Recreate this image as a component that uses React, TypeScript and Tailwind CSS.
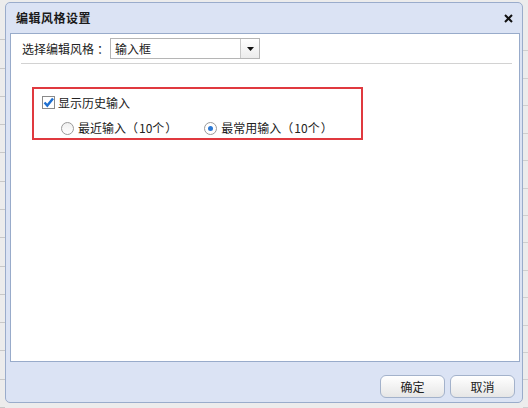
function Cell({ ch, align }: { ch: string; align: 'left' | 'right' }) {
  const cls = align === 'left' ? 'justify-start' : 'justify-end';
  return <span className={`flex w-[12px] overflow-hidden ${cls}`}>{ch}</span>;
}

function Count({ label }: { label: string }) {
  return (
    <span className="ml-[4px] flex items-center whitespace-nowrap">
      <span>{label}</span>
      <Cell ch="（" align="right" />
      <span className="mx-[1px]">10个</span>
      <Cell ch="）" align="left" />
    </span>
  );
}

export default function App() {
  const font = { fontFamily: '"Noto Sans CJK SC", "Liberation Sans", sans-serif' };
  const rows = Array.from({ length: 14 });
  return (
    <div className="relative w-[528px] h-[408px] overflow-hidden bg-[#ececec] text-[12px] text-[#222]" style={font}>
      {/* page behind the dialog */}
      <div className="flex h-full">
        <div className="w-[5px] flex flex-col pt-[12px]">
          {rows.map((_, i) => (
            <div key={i} className="h-[30px] border-b border-[#c8c8c8]" />
          ))}
        </div>
        <div className="flex-1" />
        <div className="w-[5px] flex flex-col pt-[24px]">
          {rows.map((_, i) => (
            <div key={i} className="h-[30px] border-b border-[#cfcfcf]" />
          ))}
        </div>
      </div>

      {/* dialog */}
      <div className="absolute left-[5px] top-[2px] w-[518px] h-[401px] rounded-[5px] border border-[#9aaccb] bg-[#dbe3f4] flex flex-col">
        <div className="h-[30px] flex items-center justify-between pl-[10px] pr-[8px]">
          <span className="text-[12px] font-bold text-[#1a1a1a] tracking-[0.5px]">编辑风格设置</span>
          <svg width="9" height="9" viewBox="0 0 9 9" className="mr-[1px]">
            <path d="M1 1 L8 8 M8 1 L1 8" stroke="#111" strokeWidth="2" />
          </svg>
        </div>

        <div className="ml-[4px] mr-[2px] h-[329px] border border-[#98abca] bg-white pt-[4px] px-[10px]">
          <div className="flex items-center h-[21px] pl-[1px]">
            <span className="whitespace-nowrap">选择编辑风格</span>
            <span className="ml-[3px] whitespace-nowrap">：</span>
            <div className="ml-[1px] w-[150px] h-[21px] border border-[#b5b5b5] flex items-stretch">
              <span className="flex-1 pl-[4px] leading-[19px]">输入框</span>
              <div className="w-[19px] border-l border-[#c8c8c8] bg-gradient-to-b from-white to-[#ececec] flex items-center justify-center">
                <svg width="7" height="4" viewBox="0 0 7 4">
                  <path d="M0 0 H7 L3.5 4 Z" fill="#111" />
                </svg>
              </div>
            </div>
          </div>
          <div className="mt-[4px] h-px bg-[#d2d2d2] mr-[-3px]" />

          <div className="ml-[11px] mt-[23px] w-[331px] h-[53px] border-2 border-[#e0393f] pl-[8px] pt-[7px]">
            <div className="flex items-center h-[13px]">
              <div className="w-[13px] h-[13px] border border-[#8a8a8a] bg-white flex items-center justify-center">
                <svg width="11" height="11" viewBox="0 0 11 11">
                  <path d="M1.5 5.5 L4.3 8.6 L10 1.5" stroke="#1e6fd0" strokeWidth="2.4" fill="none" />
                </svg>
              </div>
              <span className="ml-[3px]">显示历史输入</span>
            </div>
            <div className="flex items-center mt-[10px] pl-[19px]">
              <div className="w-[13px] h-[13px] rounded-full border border-[#9a9a9a] bg-gradient-to-b from-[#f0f0f0] to-white" />
              <Count label="最近输入" />
              <div className="ml-[27px] w-[13px] h-[13px] rounded-full border border-[#9a9a9a] bg-white flex items-center justify-center">
                <div className="w-[5px] h-[5px] rounded-full bg-[#2b78d4]" />
              </div>
              <Count label="最常用输入" />
            </div>
          </div>
        </div>

        <div className="flex-1 flex items-center justify-end gap-[5px] pr-[7px] pt-[9px]">
          <button className="w-[65px] h-[23px] rounded-[6px] border border-[#a3b2cb] bg-gradient-to-b from-white to-[#e6e6e6] text-[12px]">
            确定
          </button>
          <button className="w-[65px] h-[23px] rounded-[6px] border border-[#a3b2cb] bg-gradient-to-b from-white to-[#e6e6e6] text-[12px]">
            取消
          </button>
        </div>
      </div>
    </div>
  );
}
